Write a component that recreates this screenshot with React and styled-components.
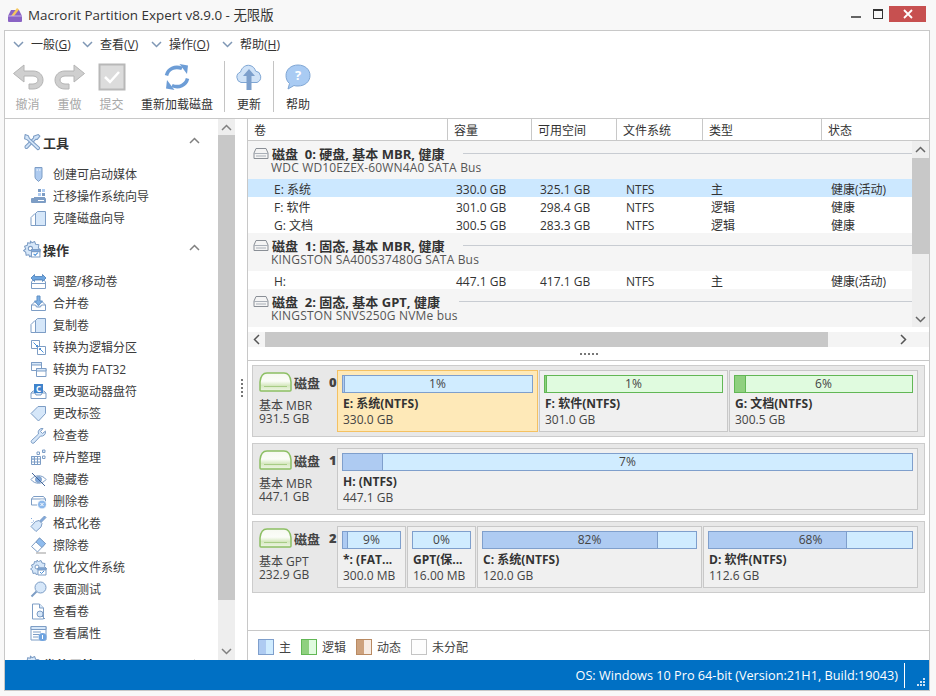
import styled, { createGlobalStyle } from 'styled-components'

const FONT = '"Open Sans", "Noto Sans CJK SC", sans-serif'

const GlobalStyle = createGlobalStyle`
  html, body { margin: 0; padding: 0; background: #f8f8f8; }
  body { font-family: ${FONT}; font-size: 12px; color: #333; }
  * { box-sizing: border-box; }
`

// ---- icons
const Svg = styled.svg`
  display: block;
  flex: none;
  fill: #d6e7f9;
  stroke: #7d9dc5;
  stroke-width: 1;
  stroke-linejoin: round;
`

const Ico = ({ size = 17, children }) => (
  <Svg width={size} height={size} viewBox="0 0 17 17">{children}</Svg>
)

const icons = {
  usb: <><path d="M5 1.5h7v9.5a3.5 3.5 0 0 1-2 3l-1.500 1.500-1.500-1.500a3.500 3.500 0 0 1-2-3z" fill="#aecbf0" /><path d="M6.500 4h1.500M9 4h1.500" stroke="#fff" /></>,
  migrate: <><rect x="8" y="1" width="3" height="3" fill="#7d9dc5" stroke="none" /><rect x="12" y="1" width="3" height="3" fill="#aecbf0" stroke="none" /><rect x="8" y="5" width="3" height="3" fill="#aecbf0" stroke="none" /><rect x="12" y="5" width="3" height="3" fill="#7d9dc5" stroke="none" /><rect x="1" y="10" width="15" height="5" rx="1" fill="#7d9dc5" stroke="none" /><path d="M8 12.500h6" stroke="#fff" /><path d="M4 9.500h11" /></>,
  clone: <><path d="M1 15.500v-8l4-4h10.500v12z" fill="#fff" /><path d="M5.500 15.500v-12l2-2h8v14z" /></>,
  resize: <><path d="M1.500 9l1.500-2h11l1.500 2v6.500h-14z" fill="#fff" /><path d="M1.500 10.500h14" /><path d="M1 5l3.500-3.500v2h8v-2L16 5l-3.500 3.500v-2h-8v2z" fill="#6ea6e0" stroke="#5f8fc4" /></>,
  merge: <><path d="M1.500 10l3-3h8l3 3v5.500h-14z" fill="#fff" /><path d="M1.500 10h4l1 2h4l1-2h4" /><path d="M7 1h3v5h2.500l-4 4.500-4-4.500h2.500z" fill="#7fb0e4" stroke="#5f8fc4" /></>,
  logical: <><rect x="1.500" y="1.500" width="8" height="8" fill="#fff" /><rect x="7.500" y="7.500" width="8" height="8" fill="#fff" /><path d="M3.500 3.500l4 4M6 7.500h1.500v-1.500M13.500 13.500l-4-4M11 9.500h-1.500v1.500" stroke="#4a90d9" fill="none" /></>,
  windows: <><rect x="1.500" y="1.500" width="10" height="8" fill="#fff" /><rect x="1.500" y="1.500" width="10" height="2.500" /><rect x="6.500" y="7.500" width="9.500" height="8" fill="#fff" /><rect x="6.500" y="7.500" width="9.500" height="2.500" /></>,
  letter: <><path d="M1 10l2-2h11l2 2v5.500h-15z" fill="#fff" /><path d="M1 10h4l1 2h5l1-2h4" /><rect x="4" y="1" width="9" height="9" fill="#3f83cc" stroke="none" /><text x="8.500" y="8.500" fontSize="8" fontWeight="700" textAnchor="middle" fill="#fff" stroke="none">C</text></>,
  tag: <path d="M1 8.500l7-7h7.500v7l-7 7.500z" />,
  wrench: <path d="M15.500 4l-3 2.500-2-2 2.500-3a4 4 0 0 0-4.500 5.500l-7 6.500a1.800 1.800 0 0 0 2.500 2.500l6.500-7a4 4 0 0 0 5-4.500z" />,
  defrag: <><rect x="1.500" y="7.500" width="9" height="8" fill="#fff" /><path d="M1.500 10h9M1.500 13h9M4.500 7.500v8M7.500 7.500v8" /><rect x="1.500" y="7.500" width="3" height="2.500" /><rect x="7" y="3" width="2.500" height="2.500" fill="#fff" /><rect x="12.500" y="1" width="2.500" height="2.500" /><rect x="12.500" y="7" width="2.500" height="2.500" fill="#fff" /></>,
  hide: <><path d="M1 8.500c3.500-5 11.500-5 15 0-3.500 5-11.500 5-15 0z" fill="#fff" /><circle cx="8.500" cy="8.500" r="3" fill="#7fa8dc" /><path d="M2 2l13 13" stroke="#44669a" /></>,
  remove: <><path d="M1.500 6l2-2.500h10l2 2.500v6h-14z" fill="#fff" /><path d="M1.500 6h14" /><circle cx="12" cy="11.500" r="4.500" fill="#8db8ea" stroke="#fff" /><path d="M10.500 10l3 3M13.500 10l-3 3" stroke="#fff" /></>,
  brush: <><path d="M14.500 1l1.500 1.500-5 5-1.500-1.500z" fill="#7fa8dc" /><path d="M5.500 6.500l3.500-1 3 3-1 3.500-5 4.500-5-5z" /><path d="M1 3.500h1M3 6h1M1.500 7.500h1" stroke="#7fa8dc" /></>,
  eraser: <><path d="M1.500 9.500l8-8.500 6 5.500-8 8.500z" fill="#fff" /><path d="M6 5l3.500-4 6 5.500-3.500 4z" fill="#8fbcee" /><path d="M6 16h10" stroke="#999" /></>,
  gear: <><path d="M7 1l1.500 1.500L11 1.500l1 2.500 3 .5-.5 3 2 2h-5v5H8l-1.500 1.500-1-2-2.500.5-.5-3L.5 10l2-1.500L1.500 6l2.500-1 .5-2.500 2.500.5z" /><circle cx="7" cy="8" r="2" fill="#fff" /><rect x="8" y="9" width="8" height="7" fill="#fff" /><rect x="8" y="9" width="8" height="2" fill="#7fa8dc" /><path d="M10 13l1.500 1.500 2.500-2.500" stroke="#4a90d9" fill="none" /></>,
  search: <><circle cx="10.500" cy="6.500" r="5.500" /><path d="M6.500 10.500l-5 5" strokeWidth="2" /></>,
  view: <><path d="M2.500 1h7l4 4v11h-11z" fill="#fff" /><path d="M9.500 1v4h4" /><circle cx="10" cy="11" r="3" /><path d="M12 13l3 3" /></>,
  props: <><rect x="1" y="1.500" width="15" height="13.500" fill="#fff" /><rect x="1" y="1.500" width="15" height="3" /><path d="M3 7h8M3 9.500h6M3 12h5" /><circle cx="12.500" cy="12" r="4" fill="#6fa4e0" stroke="none" /><path d="M12.500 10v4" stroke="#fff" /></>,
  tools: <><path d="M14.500 1.500l1.500 1.500-2.500 3h-1.500L4 14.500A1.500 1.500 0 0 1 2 12.500L10 4.500V3z" fill="#cfe2f7" /><path d="M2 1.500l3 1 1 2.500 9.500 8.500a1.500 1.500 0 0 1-2 2L4 6.500 1.500 5.500z" /></>,
}

const ToolIcons = {
  undo: (c, s) => <svg width="32" height="28" viewBox="0 0 32 28"><path d="M12 2L1.500 10.500 12 19v-6h9c3 0 5 2 5 4s-2 4-5 4h-4v5h4c6 0 10-4 10-9s-4-9-10-9h-9z" fill={c} stroke={s} /></svg>,
  redo: (c, s) => <svg width="32" height="28" viewBox="0 0 32 28"><path d="M20 2l10.500 8.500L20 19v-6h-9c-3 0-5 2-5 4s2 4 5 4h4v5h-4C5 26 1 22 1 17s4-9 10-9h9z" fill={c} stroke={s} /></svg>,
  commit: () => <svg width="28" height="28" viewBox="0 0 28 28"><rect x="1.500" y="1.500" width="25" height="25" fill="#dcdcdc" stroke="#b8b8b8" strokeWidth="2" /><path d="M7 14l5 5 9-10" fill="none" stroke="#fff" strokeWidth="2.500" /></svg>,
  reload: () => <svg width="28" height="28" viewBox="0 0 28 28"><g fill="none" stroke="#6d9dd6" strokeWidth="3.500"><path d="M3.500 12.500C5 6 12 2.500 19 5.500" /><path d="M24.500 15.500C23 22 16 25.500 9 22.500" /></g><path d="M16.500 1L25 2.500 24 11z" fill="#6d9dd6" /><path d="M11.500 27L3 25.500 4 17z" fill="#6d9dd6" /></svg>,
  cloud: () => <svg width="30" height="28" viewBox="0 0 30 28"><path d="M7 19.500a5.500 5.500 0 0 1-.5-10.500C8 4 12 1.500 16 2.500c3 .7 5 3 5.500 5.500a6 6 0 0 1 1.500 11.500z" fill="#cfe2f7" stroke="#7fa6d4" /><path d="M15 6l6 7h-3.500v14h-5V13H9z" fill="#7c9fcc" /></svg>,
  help: () => <svg width="28" height="28" viewBox="0 0 28 28"><path d="M14 2c7 0 12 4.500 12 10.500S21 23 14 23c-1.500 0-3 0-4-.5L4 26l1.500-5.500C3 18.500 2 15.500 2 12.500 2 6.500 7 2 14 2z" fill="#a9cbf3" stroke="#7fa6d4" /><text x="14" y="17" fontSize="13" fontWeight="700" textAnchor="middle" fill="#fff">?</text></svg>,
}

// ---- data
const sections = [
  {
    title: '工具', icon: 'tools', items: [
      ['usb', '创建可启动媒体'], ['migrate', '迁移操作系统向导'], ['clone', '克隆磁盘向导'],
    ],
  },
  {
    title: '操作', icon: 'gear', items: [
      ['resize', '调整/移动卷'], ['merge', '合并卷'], ['clone', '复制卷'], ['logical', '转换为逻辑分区'],
      ['windows', '转换为 FAT32'], ['letter', '更改驱动器盘符'], ['tag', '更改标签'], ['wrench', '检查卷'],
      ['defrag', '碎片整理'], ['hide', '隐藏卷'], ['remove', '删除卷'], ['brush', '格式化卷'],
      ['eraser', '擦除卷'], ['gear', '优化文件系统'], ['search', '表面测试'], ['view', '查看卷'], ['props', '查看属性'],
    ],
  },
  { title: '卷的属性', icon: 'gear', items: [] },
]

const groups = [
  {
    title: '磁盘  0: 硬盘, 基本 MBR, 健康', model: 'WDC WD10EZEX-60WN4A0 SATA Bus', rows: [
      ['E: 系统', '330.0 GB', '325.1 GB', 'NTFS', '主', '健康(活动)', true],
      ['F: 软件', '301.0 GB', '298.4 GB', 'NTFS', '逻辑', '健康'],
      ['G: 文档', '300.5 GB', '283.3 GB', 'NTFS', '逻辑', '健康'],
    ],
  },
  {
    title: '磁盘  1: 固态, 基本 MBR, 健康', model: 'KINGSTON SA400S37480G SATA Bus', rows: [
      ['H:', '447.1 GB', '417.1 GB', 'NTFS', '主', '健康(活动)'],
    ],
  },
  { title: '磁盘  2: 固态, 基本 GPT, 健康', model: 'KINGSTON SNVS250G NVMe bus', rows: [] },
]

const disks = [
  {
    num: 0, type: '基本 MBR', size: '931.5 GB', parts: [
      { name: 'E: 系统(NTFS)', size: '330.0 GB', pct: 1, width: 201, selected: true },
      { name: 'F: 软件(NTFS)', size: '301.0 GB', pct: 1, width: 189, logical: true },
      { name: 'G: 文档(NTFS)', size: '300.5 GB', pct: 6, grow: true, logical: true },
    ],
  },
  {
    num: 1, type: '基本 MBR', size: '447.1 GB', parts: [
      { name: 'H: (NTFS)', size: '447.1 GB', pct: 7, grow: true },
    ],
  },
  {
    num: 2, type: '基本 GPT', size: '232.9 GB', parts: [
      { name: '*: (FAT...', size: '300.0 MB', pct: 9, width: 69 },
      { name: 'GPT(保...', size: '16.00 MB', pct: 0, width: 69 },
      { name: 'C: 系统(NTFS)', size: '120.0 GB', pct: 82, width: 225 },
      { name: 'D: 软件(NTFS)', size: '112.6 GB', pct: 68, grow: true },
    ],
  },
]

const legend = [
  ['主', '#aecbf2', '#d0ecff', '#7f9fcc'],
  ['逻辑', '#8fd07f', '#e0fbdf', '#62b755'],
  ['动态', '#cda27e', '#f7ece4', '#b98a62'],
  ['未分配', '#fdfdfd', '#fdfdfd', '#c4c4c4'],
]

const Chevron = ({ up, color = '#7f97b5' }) => (
  <svg width="11" height="7" viewBox="0 0 11 7">
    <path d={up ? 'M1 6l4.500-4.500L10 6' : 'M1 1l4.500 4.500L10 1'} fill="none" stroke={color} strokeWidth="1.500" />
  </svg>
)

// ---- window frame
const Win = styled.div`
  width: 936px;
  height: 696px;
  display: flex;
  flex-direction: column;
  overflow: hidden;
  background: #f8f8f8;
`
const TitleBar = styled.div`
  height: 30px;
  flex: none;
  display: flex;
  align-items: flex-start;
  padding: 7px 10px 0 7px;
`
const AppLogo = styled.svg`
  margin-right: 5px;
  flex: none;
`
const TitleText = styled.div`
  font-size: 13.4px;
  line-height: 16px;
  color: #333;
  flex: 1;
`
const WinBtn = styled.div`
  height: 16px;
  width: ${p => p.$w}px;
  margin-top: -1px;
  display: flex;
  align-items: center;
  justify-content: center;
  background: ${p => (p.$close ? '#c75050' : 'transparent')};
`
const Client = styled.div`
  margin-left: 4px;
  width: 926px;
  height: 661px;
  flex: none;
  border: 1px solid #c8c8c8;
  background: #fff;
  display: flex;
  flex-direction: column;
`

// ---- menu and toolbar
const MenuBar = styled.div`
  height: 28px;
  flex: none;
  display: flex;
  align-items: center;
  padding: 0 0 2px 8px;
`
const MenuItem = styled.div`
  display: flex;
  align-items: center;
  width: ${p => p.$w}px;
  gap: 7px;
  color: #333;
  u { text-decoration: underline; }
`
const ToolBar = styled.div`
  height: 60px;
  flex: none;
  display: flex;
  padding: 2px 0 0 2px;
  border-bottom: 1px solid #c8c8c8;
`
const Tool = styled.div`
  width: ${p => p.$w}px;
  height: 52px;
  display: flex;
  flex-direction: column;
  align-items: center;
  color: ${p => (p.$off ? '#a8a8a8' : '#333')};
`
const ToolIcon = styled.div`
  height: 34px;
  display: flex;
  align-items: center;
  margin-bottom: 2px;
`
const ToolSep = styled.div`
  width: 1px;
  height: 51px;
  margin-left: ${p => p.$ml || 0}px;
  background: #c4c4c4;
  flex: none;
`

// ---- main area
const Main = styled.div`
  flex: 1;
  min-height: 0;
  display: flex;
`
const Sidebar = styled.div`
  width: 213px;
  flex: none;
  overflow: hidden;
  padding: 12px 0 0 18px;
`
const Section = styled.div`
  margin-bottom: 9px;
`
const SectionHead = styled.div`
  height: 24px;
  display: flex;
  align-items: center;
  gap: 2px;
  padding-bottom: 2px;
  font-size: 13px;
  font-weight: 700;
  color: #333;
  margin-bottom: 8px;
  span { flex: 1; }
`
const CollapseBtn = styled.div`
  margin-right: 18px;
  display: flex;
  padding-bottom: 3px;
`
const NavItem = styled.div`
  height: 22px;
  display: flex;
  align-items: center;
  gap: 6px;
  padding-left: 7px;
  color: #3c3c3c;
`
const VScroll = styled.div`
  width: ${p => p.$w}px;
  flex: none;
  background: #eeeeee;
  display: flex;
  flex-direction: column;
`
const ScrollBtn = styled.div`
  height: ${p => p.$size}px;
  flex: none;
  display: flex;
  align-items: center;
  justify-content: center;
`
const VThumb = styled.div`
  height: ${p => p.$h}px;
  flex: none;
  background: #c8c8c8;
`
const Spacer = styled.div`
  flex: 1;
`
const VSplit = styled.div`
  width: 13px;
  flex: none;
  border-right: 1px solid #c8c8c8;
  display: flex;
  flex-direction: column;
  align-items: center;
  padding: 260px 0 0 1px;
  gap: 2px;
`
const Dot = styled.i`
  display: block;
  width: 2px;
  height: 2px;
  background: #777;
`
const RightPane = styled.div`
  flex: 1;
  min-width: 0;
  display: flex;
  flex-direction: column;
`

// ---- volume table
const COLS = '200px 84px 86px 85px 120px 90px'
const HeadRow = styled.div`
  height: 22px;
  flex: none;
  display: grid;
  grid-template-columns: 200px 84px 85px 86px 119px 1fr;
  border-bottom: 1px solid #c8c8c8;
`
const HeadCell = styled.div`
  padding-left: 6px;
  line-height: 23px;
  border-right: ${p => (p.$last ? 'none' : '1px solid #c8c8c8')};
`
const ListArea = styled.div`
  height: 186px;
  flex: none;
  display: flex;
`
const List = styled.div`
  flex: 1;
  min-width: 0;
  overflow: hidden;
  background: #f5f5f5;
`
const GroupHead = styled.div`
  height: 38px;
  padding: 5px 0 0 5px;
`
const GroupTitle = styled.div`
  display: flex;
  align-items: center;
  height: 15px;
  font-size: 13px;
  font-weight: 700;
  color: #333;
  white-space: pre;
  hr {
    flex: 1;
    margin: 0 0 0 19px;
    border: 0;
    border-top: 1px solid #c8ccd2;
  }
`
const DiskGlyph = styled.svg`
  margin-right: 3px;
  flex: none;
`
const GroupModel = styled.div`
  padding-left: 18px;
  line-height: 14px;
  letter-spacing: .17px;
  color: #555;
`
const Row = styled.div`
  height: 18px;
  display: grid;
  grid-template-columns: ${COLS};
  align-items: center;
  background: ${p => (p.$sel ? '#cce8ff' : '#fff')};
  div { padding: 1px 0 0 8px; white-space: nowrap; }
  div:first-child { padding-left: 26px; }
`
const HScroll = styled.div`
  height: 15px;
  margin-top: 5px;
  flex: none;
  display: flex;
  background: #f4f4f4;
`
const HBtn = styled.div`
  width: 17px;
  flex: none;
  display: flex;
  align-items: center;
  justify-content: center;
`
const HThumb = styled.div`
  width: 563px;
  flex: none;
  background: #c8c8c8;
`
const HSplit = styled.div`
  height: 14px;
  flex: none;
  border-bottom: 1px solid #c8c8c8;
  display: flex;
  align-items: center;
  justify-content: center;
  gap: 2px;
`

// ---- disk map
const DiskMap = styled.div`
  flex: 1;
  min-height: 0;
  padding: 4px 4px 0 4px;
  display: flex;
  flex-direction: column;
  gap: 6px;
`
const DiskCard = styled.div`
  height: 72px;
  flex: none;
  display: flex;
  background: #e8e8e8;
  border: 1px solid #ccc;
  padding: 4px 6px 4px 0;
`
const DiskInfo = styled.div`
  width: 84px;
  flex: none;
  padding: 2px 0 0 6px;
  color: #444;
`
const DiskHead = styled.div`
  display: flex;
  align-items: center;
  height: 20px;
  margin-bottom: 7px;
  font-size: 13px;
  font-weight: 700;
  color: #444;
  b { margin-left: 9px; }
`
const DiskLine = styled.div`
  line-height: 13px;
`
const Parts = styled.div`
  flex: 1;
  min-width: 0;
  display: flex;
  gap: 1px;
`
const Part = styled.div`
  ${p => (p.$grow ? 'flex: 1;' : `width: ${p.$w}px; flex: none;`)}
  min-width: 0;
  padding: 4px;
  border: 1px solid ${p => (p.$sel ? '#f4c162' : '#c8c8c8')};
  background: ${p => (p.$sel ? '#fee9b8' : '#f0f0f0')};
`
const Bar = styled.div`
  position: relative;
  height: 18px;
  border: 1px solid ${p => (p.$logical ? '#62b755' : '#7f9fcc')};
  background: ${p => (p.$logical ? '#e0fbdf' : '#d0ecff')};
  margin-bottom: 3px;
`
const BarFill = styled.div`
  height: 100%;
  background: ${p => (p.$logical ? '#8fd07f' : '#aecbf2')};
  border-right: 1px solid ${p => (p.$logical ? '#62b755' : '#7f9fcc')};
`
const BarLabel = styled.div`
  position: absolute;
  inset: 0;
  text-align: center;
  line-height: 16px;
  color: #444;
`
const PartName = styled.div`
  font-weight: 700;
  line-height: 16px;
  padding-left: 1px;
  white-space: nowrap;
  color: #333;
`
const PartSize = styled.div`
  line-height: 16px;
  padding-left: 1px;
  color: #444;
`

// ---- legend and status
const Legend = styled.div`
  height: 30px;
  flex: none;
  border-top: 1px solid #c8c8c8;
  display: flex;
  align-items: center;
  padding: 2px 0 0 10px;
  color: #444;
`
const LegendItem = styled.div`
  display: flex;
  align-items: center;
  gap: 5px;
  width: 55px;
  &:first-child { width: 43px; }
  white-space: nowrap;
`
const Swatch = styled.div`
  width: 16px;
  height: 16px;
  flex: none;
  border: 1px solid ${p => p.$b};
  background: linear-gradient(90deg, ${p => p.$l} 50%, ${p => p.$r} 50%);
`
const StatusBar = styled.div`
  height: 30px;
  flex: none;
  background: #0070c4;
  color: #fff;
  font-size: 12.7px;
  display: flex;
  align-items: center;
  justify-content: flex-end;
  padding-right: 5px;
`
const StatusSep = styled.div`
  width: 1px;
  height: 25px;
  background: #fff;
  margin: 0 19px 0 6px;
`
const Grip = styled.svg`
  position: absolute;
  right: 4px;
  bottom: 3px;
`
const StatusWrap = styled.div`
  position: relative;
  flex: none;
`
const BigDiskSvg = styled.svg`
  margin-right: 2px;
  flex: none;
`

const Disk = () => (
  <DiskGlyph width="16" height="13" viewBox="0 0 16 13">
    <path d="M1 6l2-4.500h10L15 6v5.500H1z" fill="#f4f4f4" stroke="#8a8f96" />
    <path d="M1 6.500h14M3 9h10" stroke="#aab0b8" fill="none" />
  </DiskGlyph>
)

const BigDisk = () => (
  <BigDiskSvg width="33" height="20" viewBox="0 0 33 20">
    <defs>
      <linearGradient id="dg" x1="0" y1="0" x2="0" y2="1">
        <stop offset="0" stopColor="#f6f9f1" />
        <stop offset=".45" stopColor="#fbfdf8" />
        <stop offset=".7" stopColor="#d6e8c0" />
        <stop offset="1" stopColor="#eff6e6" />
      </linearGradient>
    </defs>
    <path d="M1 10C1.500 5 3 1 8 1h17c5 0 6.500 4 7 9v8a1 1 0 0 1-1 1H2a1 1 0 0 1-1-1z" fill="url(#dg)" stroke="#8cbf63" strokeWidth="1.500" />
    <path d="M5 14.500h23" stroke="#a7cc85" fill="none" />
  </BigDiskSvg>
)

const Partition = ({ part }) => (
  <Part $grow={part.grow} $w={part.width} $sel={part.selected}>
    <Bar $logical={part.logical}>
      {part.pct > 0 && <BarFill $logical={part.logical} style={{ width: `${part.pct}%` }} />}
      <BarLabel>{part.pct}%</BarLabel>
    </Bar>
    <PartName>{part.name}</PartName>
    <PartSize>{part.size}</PartSize>
  </Part>
)

export default function App() {
  return (
    <Win>
      <GlobalStyle />
      <TitleBar>
        <AppLogo width="16" height="16" viewBox="0 0 16 16">
          <path d="M1 9l3-6h8l3 6v5a1 1 0 0 1-1 1H2a1 1 0 0 1-1-1z" fill="#8a63c4" />
          <path d="M4 9l6-8 2 1.500-5 6.500z" fill="#f5c75d" />
          <path d="M1 9h14" stroke="#c7b2e6" />
        </AppLogo>
        <TitleText>Macrorit Partition Expert v8.9.0 - 无限版</TitleText>
        <WinBtn $w={22}>
          <svg width="10" height="10" viewBox="0 0 10 10"><path d="M0 8h10" stroke="#333" strokeWidth="1.500" /></svg>
        </WinBtn>
        <WinBtn $w={22}>
          <svg width="10" height="10" viewBox="0 0 10 10"><rect x=".5" y=".5" width="9" height="9" fill="none" stroke="#333" /><path d="M0 1.500h10" stroke="#333" /></svg>
        </WinBtn>
        <WinBtn $w={37} $close>
          <svg width="10" height="10" viewBox="0 0 10 10"><path d="M1 1l8 8M9 1l-8 8" stroke="#fff" strokeWidth="1.800" /></svg>
        </WinBtn>
      </TitleBar>

      <Client>
        <MenuBar>
          {[['一般', 'G', 69], ['查看', 'V', 69], ['操作', 'O', 71], ['帮助', 'H', 70]].map(([label, key, w]) => (
            <MenuItem key={key} $w={w}>
              <Chevron />
              <span>{label}(<u>{key}</u>)</span>
            </MenuItem>
          ))}
        </MenuBar>

        <ToolBar>
          <Tool $w={41} $off><ToolIcon>{ToolIcons.undo('#cfcfcf', '#b4b4b4')}</ToolIcon>撤消</Tool>
          <Tool $w={43} $off><ToolIcon>{ToolIcons.redo('#cfcfcf', '#b4b4b4')}</ToolIcon>重做</Tool>
          <Tool $w={41} $off><ToolIcon>{ToolIcons.commit()}</ToolIcon>提交</Tool>
          <Tool $w={90}><ToolIcon>{ToolIcons.reload()}</ToolIcon>重新加载磁盘</Tool>
          <ToolSep $ml={2} />
          <Tool $w={48}><ToolIcon>{ToolIcons.cloud()}</ToolIcon>更新</Tool>
          <ToolSep />
          <Tool $w={48}><ToolIcon>{ToolIcons.help()}</ToolIcon>帮助</Tool>
        </ToolBar>

        <Main>
          <Sidebar>
            {sections.map(s => (
              <Section key={s.title}>
                <SectionHead>
                  <Ico size={18}>{icons[s.icon]}</Ico>
                  <span>{s.title}</span>
                  <CollapseBtn><Chevron up color="#808080" /></CollapseBtn>
                </SectionHead>
                {s.items.map(([icon, label]) => (
                  <NavItem key={label}>
                    <Ico>{icons[icon]}</Ico>
                    {label}
                  </NavItem>
                ))}
              </Section>
            ))}
          </Sidebar>
          <VScroll $w={17}>
            <ScrollBtn $size={16}><Chevron up color="#808080" /></ScrollBtn>
            <VThumb $h={465} />
            <Spacer />
            <ScrollBtn $size={17}><Chevron color="#808080" /></ScrollBtn>
          </VScroll>
          <VSplit>
            <Dot /><Dot /><Dot /><Dot /><Dot />
          </VSplit>

          <RightPane>
            <HeadRow>
              <HeadCell>卷</HeadCell>
              <HeadCell>容量</HeadCell>
              <HeadCell>可用空间</HeadCell>
              <HeadCell>文件系统</HeadCell>
              <HeadCell>类型</HeadCell>
              <HeadCell $last>状态</HeadCell>
            </HeadRow>
            <ListArea>
              <List>
                {groups.map(g => (
                  <div key={g.title}>
                    <GroupHead>
                      <GroupTitle><Disk />{g.title}<hr /></GroupTitle>
                      <GroupModel>{g.model}</GroupModel>
                    </GroupHead>
                    {g.rows.map(r => (
                      <Row key={r[0]} $sel={r[6]}>
                        <div>{r[0]}</div><div>{r[1]}</div><div>{r[2]}</div>
                        <div>{r[3]}</div><div>{r[4]}</div><div>{r[5]}</div>
                      </Row>
                    ))}
                  </div>
                ))}
              </List>
              <VScroll $w={17}>
                <ScrollBtn $size={17}><Chevron up color="#666" /></ScrollBtn>
                <VThumb $h={96} />
                <Spacer />
                <ScrollBtn $size={15}><Chevron color="#666" /></ScrollBtn>
              </VScroll>
            </ListArea>
            <HScroll>
              <HBtn><svg width="7" height="11" viewBox="0 0 7 11"><path d="M6 1L1.500 5.500 6 10" fill="none" stroke="#555" strokeWidth="1.500" /></svg></HBtn>
              <HThumb />
              <Spacer />
              <HBtn><svg width="7" height="11" viewBox="0 0 7 11"><path d="M1 1l4.500 4.500L1 10" fill="none" stroke="#555" strokeWidth="1.500" /></svg></HBtn>
              <HBtn />
            </HScroll>
            <HSplit>
              <Dot /><Dot /><Dot /><Dot /><Dot />
            </HSplit>

            <DiskMap>
              {disks.map(d => (
                <DiskCard key={d.num}>
                  <DiskInfo>
                    <DiskHead><BigDisk />磁盘<b>{d.num}</b></DiskHead>
                    <DiskLine>{d.type}</DiskLine>
                    <DiskLine>{d.size}</DiskLine>
                  </DiskInfo>
                  <Parts>
                    {d.parts.map(p => <Partition key={p.name} part={p} />)}
                  </Parts>
                </DiskCard>
              ))}
            </DiskMap>

            <Legend>
              {legend.map(([label, l, r, b]) => (
                <LegendItem key={label}>
                  <Swatch $l={l} $r={r} $b={b} />
                  {label}
                </LegendItem>
              ))}
            </Legend>
          </RightPane>
        </Main>

        <StatusWrap>
          <StatusBar>
            OS: Windows 10 Pro 64-bit (Version:21H1, Build:19043)
            <StatusSep />
          </StatusBar>
          <Grip width="9" height="9" viewBox="0 0 9 9">
            <path d="M7 0h2v2H7zM4 3h2v2H4zM7 3h2v2H7zM1 6h2v2H1zM4 6h2v2H4zM7 6h2v2H7z" fill="#cfe3f5" />
          </Grip>
        </StatusWrap>
      </Client>
    </Win>
  )
}
